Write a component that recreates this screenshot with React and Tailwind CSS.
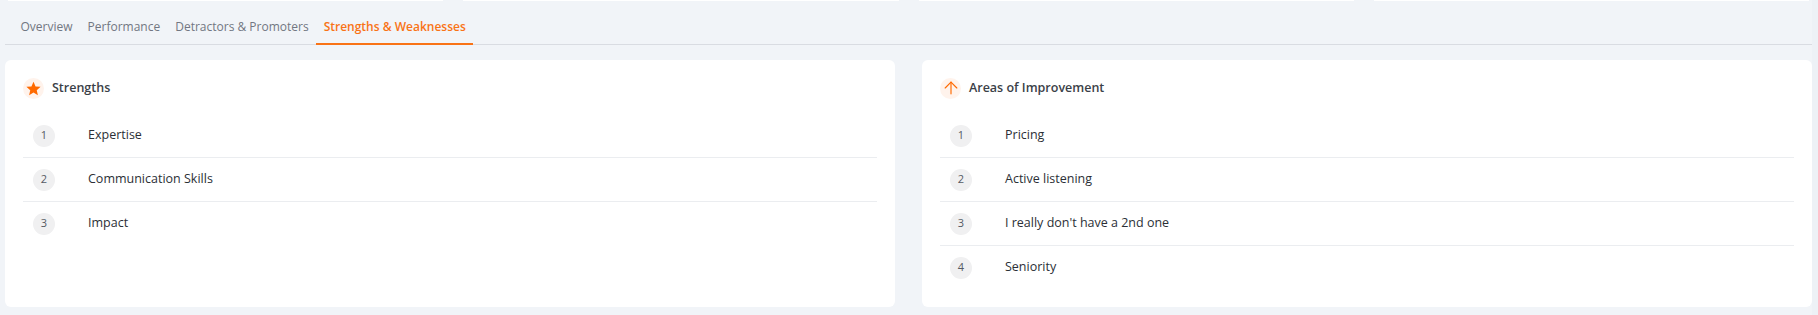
import { ArrowUp } from 'lucide-react';

const TABS = ['Overview', 'Performance', 'Detractors & Promoters', 'Strengths & Weaknesses'];
const STRENGTHS = ['Expertise', 'Communication Skills', 'Impact'];
const IMPROVEMENTS = ['Pricing', 'Active listening', "I really don't have a 2nd one", 'Seniority'];

export default function App() {
  return (
    <div
      className="flex h-[315px] w-[1818px] bg-[#f1f4f8] overflow-hidden"
      style={{ fontFamily: '"Open Sans", "Noto Sans", sans-serif' }}
    >
      <div className="flex-1 flex flex-col pl-[5px]">
        {/* Bottom edge of the card row above */}
        <div className="h-[1px] flex gap-[20px] px-[3px]">
          {[0, 1, 2, 3].map(i => (
            <div key={i} className="flex-1 bg-white" />
          ))}
        </div>

        {/* Tabs */}
        <div className="flex pl-[8px] pt-[17px] border-b border-[#d9dce2]">
          {TABS.map((tab, i) => {
            const active = i === TABS.length - 1;
            return (
              <div
                key={tab}
                className={`px-[7.5px] pb-[7px] text-[12px] leading-[18px] border-b-2 -mb-px whitespace-nowrap ${
                  active ? 'border-[#f97316] text-[#f97316] font-semibold' : 'border-transparent text-[#727782]'
                }`}
              >
                {tab}
              </div>
            );
          })}
        </div>

        {/* Cards */}
        <div className="flex gap-[27px] mt-[15px] pb-[8px] flex-1">
          <ListCard
            title="Strengths"
            icon={
              <svg viewBox="0 0 24 24" className="w-[17px] h-[17px]" fill="#ff6a00">
                <path d="M12 2.5l2.9 6.6 7.1.6-5.4 4.7 1.6 7-6.2-3.7-6.2 3.7 1.6-7L2 9.7l7.1-.6z" />
              </svg>
            }
            items={STRENGTHS}
          />
          <ListCard
            title="Areas of Improvement"
            icon={<ArrowUp className="w-[20px] h-[20px] text-[#ff6a00]" strokeWidth={1.4} />}
            items={IMPROVEMENTS}
          />
        </div>
      </div>
      {/* scrollbar gutter */}
      <div className="w-[6px] bg-[#edf1f6]" />
    </div>
  );
}

function ListCard({ title, icon, items }) {
  return (
    <div className="flex-1 bg-white rounded-[6px] px-[18px] pt-[17px] pb-[18px]">
      <div className="flex items-center gap-[8px] h-[22px]">
        <div className="w-[21px] h-[21px] rounded-full bg-[#fff3ec] flex items-center justify-center">
          {icon}
        </div>
        <span className="text-[12.5px] font-semibold text-[#3b3f48]">{title}</span>
      </div>
      <div className="mt-[15px]">
        {items.map((item, i) => (
          <div
            key={item}
            className="h-[44px] flex items-center pl-[10px] border-b border-[#ebedf0] last:border-b-0 last:h-[43px]"
          >
            <div className="w-[22px] h-[22px] rounded-full bg-[#f0f0f1] flex items-center justify-center text-[11px] text-[#555a63]">
              {i + 1}
            </div>
            <span className="ml-[33px] text-[12.5px] text-[#2b2f36]">{item}</span>
          </div>
        ))}
      </div>
    </div>
  );
}
